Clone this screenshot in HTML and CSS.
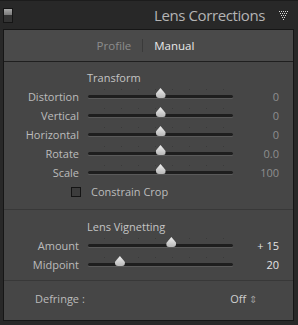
FILE: index.html
```html
<!DOCTYPE html>
<html lang="en">
<head>
    <meta charset="UTF-8" />
    <title>Lens Corrections</title>
    <link rel="stylesheet" href="styles.css">
</head>
<body>
<header class="panel-head">
    <div class="switch"><span></span></div>
    <h1>Lens Corrections</h1>
    <svg class="collapse" width="9" height="9" viewBox="0 0 9 9">
        <g fill="#d8d8d8">
            <rect x="0" y="0" width="1" height="1"/><rect x="2" y="0" width="1" height="1"/><rect x="4" y="0" width="1" height="1"/><rect x="6" y="0" width="1" height="1"/><rect x="8" y="0" width="1" height="1"/>
            <rect x="1" y="2" width="1" height="1"/><rect x="3" y="2" width="1" height="1"/><rect x="5" y="2" width="1" height="1"/><rect x="7" y="2" width="1" height="1"/>
            <rect x="2" y="4" width="1" height="1"/><rect x="4" y="4" width="1" height="1"/><rect x="6" y="4" width="1" height="1"/>
            <rect x="3" y="6" width="1" height="1"/><rect x="5" y="6" width="1" height="1"/>
            <rect x="4" y="8" width="1" height="1"/>
        </g>
    </svg>
</header>

<main class="panel">
    <div class="tabs">
        <span class="tab">Profile</span>
        <span class="tab-sep"></span>
        <span class="tab active">Manual</span>
    </div>

    <section class="group">
        <h2>Transform</h2>
        <div class="row">
            <label>Distortion</label>
            <div class="slider"><div class="thumb" style="left: 50%"></div></div>
            <span class="value">0</span>
        </div>
        <div class="row">
            <label>Vertical</label>
            <div class="slider"><div class="thumb" style="left: 50%"></div></div>
            <span class="value">0</span>
        </div>
        <div class="row">
            <label>Horizontal</label>
            <div class="slider"><div class="thumb" style="left: 50%"></div></div>
            <span class="value">0</span>
        </div>
        <div class="row">
            <label>Rotate</label>
            <div class="slider"><div class="thumb" style="left: 50%"></div></div>
            <span class="value">0.0</span>
        </div>
        <div class="row">
            <label>Scale</label>
            <div class="slider"><div class="thumb" style="left: 50%"></div></div>
            <span class="value">100</span>
        </div>
        <div class="check-row">
            <span class="checkbox"></span>
            <span>Constrain Crop</span>
        </div>
    </section>

    <section class="group vignette">
        <h2>Lens Vignetting</h2>
        <div class="row">
            <label>Amount</label>
            <div class="slider"><div class="thumb" style="left: 57.5%"></div></div>
            <span class="value lit">+ 15</span>
        </div>
        <div class="row">
            <label>Midpoint</label>
            <div class="slider"><div class="thumb" style="left: 22%"></div></div>
            <span class="value lit">20</span>
        </div>
    </section>

    <section class="group defringe">
        <span class="defringe-label">Defringe :</span>
        <span class="select">Off <span class="arrows">&#8661;</span></span>
    </section>
</main>
</body>
</html>
```

FILE: styles.css
```css
* {
    box-sizing: border-box;
    margin: 0;
    padding: 0;
}

body {
    width: 298px;
    height: 325px;
    overflow: hidden;
    background: #282828;
    font-family: 'Open Sans', 'Liberation Sans', sans-serif;
    font-size: 11px;
    color: #bcbcbc;
}

.panel-head {
    height: 29px;
    display: flex;
    align-items: center;
    padding: 0 10px 0 3px;
    border-top: 1px solid #1c1c1c;
}

.switch {
    width: 10px;
    height: 15px;
    border: 1px solid #151515;
    background: #333;
}

.switch span {
    display: block;
    height: 6px;
    background: linear-gradient(#a8a8a8, #7a7a7a);
}

.panel-head h1 {
    flex: 1;
    text-align: right;
    font-size: 15px;
    letter-spacing: -0.4px;
    font-weight: normal;
    color: #b4b4b4;
    margin-right: 14px;
}

.collapse {
    display: block;
}

.panel {
    margin: 0 4px 0 3px;
    height: 292px;
    background: #464646;
    border: 1px solid #161616;
}

.tabs {
    height: 32px;
    display: flex;
    align-items: center;
    justify-content: center;
    gap: 11px;
    padding-right: 6px;
    background: #4a4a4a;
    border-bottom: 1px solid #1f1f1f;
    font-size: 11.5px;
}

.tab {
    color: #8c8c8c;
}

.tab.active {
    color: #e8e8e8;
}

.tab-sep {
    width: 1px;
    height: 13px;
    background: #3a3a3a;
}

.group {
    padding: 6px 14px 8px 0;
    border-bottom: 1px solid #383838;
}

.group h2 {
    font-size: 11px;
    font-weight: normal;
    color: #c4c4c4;
    height: 19px;
    line-height: 19px;
    padding-left: 83px;
}

.row {
    height: 19px;
    display: grid;
    grid-template-columns: 75px 145px 1fr;
    column-gap: 9px;
    align-items: center;
}

.row label {
    text-align: right;
}

.slider {
    position: relative;
    height: 3px;
    border-radius: 2px;
    background: #1e1e1e;
    box-shadow: 0 1px 0 #5a5a5a;
}

.slider::before {
    content: '';
    position: absolute;
    left: 8px;
    right: 8px;
    top: -6px;
    height: 1px;
    background-image: radial-gradient(circle, #3a3a3a 0.6px, transparent 0.8px);
    background-size: 17px 1px;
}

.thumb {
    position: absolute;
    top: -7px;
    width: 10px;
    height: 10px;
    margin-left: -5px;
    background: linear-gradient(#f0f0f0, #b8b8b8);
    clip-path: polygon(50% 0, 80% 35%, 100% 60%, 100% 100%, 0 100%, 0 60%, 20% 35%);
    border-radius: 0 0 3px 3px;
}

.value {
    text-align: right;
    color: #8e8e8e;
}

.value.lit {
    color: #e4e4e4;
}

.check-row {
    height: 19px;
    display: flex;
    align-items: center;
    gap: 10px;
    padding-left: 67px;
}

.checkbox {
    width: 10px;
    height: 10px;
    border: 1px solid #141414;
    background: #3c3c3c;
}

.vignette {
    padding: 8px 14px 6px 0;
}

.vignette h2 {
    height: 18px;
    line-height: 18px;
}

.defringe {
    border-bottom: none;
    display: flex;
    justify-content: space-between;
    align-items: center;
    height: 35px;
    padding: 0 36px 0 31px;
}

.select {
    color: #cfcfcf;
}

.arrows {
    font-size: 10px;
    color: #9a9a9a;
}
```
